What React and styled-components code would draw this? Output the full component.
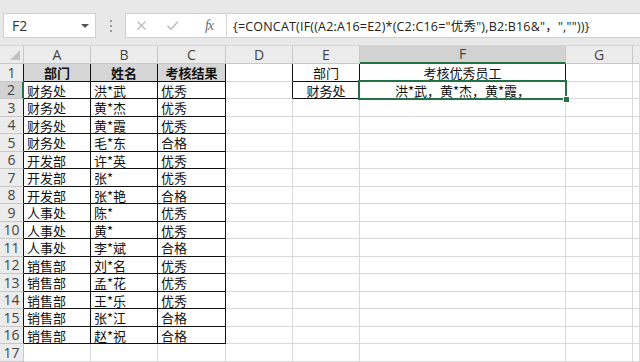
import React from "react";
import styled, { createGlobalStyle, css } from "styled-components";

const Global = createGlobalStyle`
  html, body { margin: 0; padding: 0; background: #ffffff; }
  body { width: 640px; height: 362px; overflow: hidden; }
`;

const CJK = `"Noto Sans CJK SC", "Microsoft YaHei", sans-serif`;

const Page = styled.div`
  width: 640px;
  height: 362px;
  overflow: hidden;
  display: flex;
  flex-direction: column;
  background: #ffffff;
`;

const Toolbar = styled.div`
  height: 46px;
  flex: none;
  box-sizing: border-box;
  background: #e8e8e8;
  display: flex;
  align-items: flex-start;
  padding: 13px 0 0 3px;
  border-bottom: 1px solid #d6d6d6;
`;

const NameBox = styled.div`
  width: 93px;
  height: 25px;
  box-sizing: border-box;
  background: #fff;
  border: 1px solid #cfcfcf;
  display: flex;
  align-items: center;
  justify-content: space-between;
  padding: 0 6px 0 8px;
  font: 14px "Open Sans", "Liberation Sans", sans-serif;
  color: #333;
`;

const Caret = styled.span`
  width: 0;
  height: 0;
  border-left: 4px solid transparent;
  border-right: 4px solid transparent;
  border-top: 4px solid #555;
`;

const Grip = styled.div`
  width: 29px;
  height: 25px;
  display: flex;
  flex-direction: column;
  align-items: center;
  justify-content: center;
  gap: 3px;
`;

const Dot = styled.span`
  width: 2px;
  height: 2px;
  background: #9a9a9a;
`;

const FormulaBox = styled.div`
  flex: 1;
  height: 25px;
  box-sizing: border-box;
  background: #fff;
  border: 1px solid #cfcfcf;
  border-right: none;
  display: flex;
  align-items: center;
`;

const ToolBtn = styled.span`
  width: 31px;
  display: flex;
  justify-content: center;
  align-items: center;
  color: ${(p) => p.$color || "#bdbdbd"};
`;

const Fx = styled.span`
  width: 42px;
  text-align: center;
  font: italic 14px "Liberation Serif", serif;
  color: #6a6a6a;
  letter-spacing: -1px;
`;

const Divider = styled.span`
  width: 1px;
  height: 25px;
  background: #d6d6d6;
  margin-left: -4px;
`;

const FormulaText = styled.span`
  padding-left: 6px;
  font: 12.5px "Open Sans", ${CJK};
  color: #222;
  white-space: nowrap;
  letter-spacing: 0.2px;
`;

const Sheet = styled.div`
  flex: 1;
  display: grid;
  grid-template-columns: 24px 67px 67px 68px 67px 67px 206px 67px 1fr;
  grid-template-rows: ${(p) => p.$rows};
`;

const Head = styled.div`
  box-sizing: border-box;
  background: ${(p) => (p.$sel ? "#d2d2d2" : "#ececec")};
  border-right: 1px solid ${(p) => p.$right || "#c8c8c8"};
  border-bottom: 1px solid ${(p) => p.$bottom || "#c8c8c8"};
  display: flex;
  align-items: center;
  justify-content: center;
  font: 14px "Open Sans", "Liberation Sans", sans-serif;
  line-height: 1;
  color: #444;
  position: relative;
  white-space: nowrap;
  ${(p) =>
    p.$selCol &&
    css`
      border-bottom: 2px solid #217346;
    `}
  ${(p) =>
    p.$selRow &&
    css`
      border-right: 2px solid #217346;
    `}
`;

const CornerTri = styled.span`
  position: absolute;
  right: 3px;
  bottom: 3px;
  width: 0;
  height: 0;
  border-left: 10px solid transparent;
  border-bottom: 10px solid #c2c2c2;
`;

const Cell = styled.div`
  box-sizing: border-box;
  position: relative;
  background: ${(p) => (p.$fill ? "#d6d6d6" : "#fff")};
  border-right: 1px solid ${(p) => (p.$right ? "#111" : "#d9d9d9")};
  border-bottom: 1px solid ${(p) => (p.$bottom ? "#111" : "#d9d9d9")};
  display: flex;
  align-items: center;
  justify-content: ${(p) => (p.$center ? "center" : "flex-start")};
  padding-left: ${(p) => (p.$center ? "0" : "3px")};
  font: ${(p) => (p.$bold ? "bold" : "normal")} 13px ${CJK};
  line-height: 1;
  color: #111;
  white-space: nowrap;
  z-index: ${(p) => (p.$active ? 2 : "auto")};
`;

const Selection = styled.div`
  position: absolute;
  left: -2px;
  top: -2px;
  right: -2px;
  bottom: -2px;
  border: 2px solid #217346;
  pointer-events: none;
`;

const Handle = styled.span`
  position: absolute;
  right: -5px;
  bottom: -5px;
  width: 5px;
  height: 5px;
  background: #217346;
  border: 1px solid #fff;
`;

const data = [
  ["部门", "姓名", "考核结果"],
  ["财务处", "洪*武", "优秀"],
  ["财务处", "黄*杰", "优秀"],
  ["财务处", "黄*霞", "优秀"],
  ["财务处", "毛*东", "合格"],
  ["开发部", "许*英", "优秀"],
  ["开发部", "张*", "优秀"],
  ["开发部", "张*艳", "合格"],
  ["人事处", "陈*", "优秀"],
  ["人事处", "黄*", "优秀"],
  ["人事处", "李*斌", "合格"],
  ["销售部", "刘*名", "优秀"],
  ["销售部", "孟*花", "优秀"],
  ["销售部", "王*乐", "优秀"],
  ["销售部", "张*江", "合格"],
  ["销售部", "赵*祝", "合格"],
];

const side = {
  1: { 5: "部门", 6: "考核优秀员工" },
  2: { 5: "财务处", 6: "洪*武，黄*杰，黄*霞，" },
};

const colLetters = ["A", "B", "C", "D", "E", "F", "G", ""];
const ROWS = 17;

const inTable = (r, c) =>
  (r >= 1 && r <= 16 && c >= 1 && c <= 3) ||
  (r >= 1 && r <= 2 && (c === 5 || c === 6));

const getText = (r, c) => {
  if (c >= 1 && c <= 3 && r <= 16) return data[r - 1][c - 1];
  if (side[r] && side[r][c]) return side[r][c];
  return "";
};

const XIcon = () => (
  <svg width="11" height="11" viewBox="0 0 11 11">
    <path d="M1.5 1.5 L9.5 9.5 M9.5 1.5 L1.5 9.5" stroke="currentColor" strokeWidth="1.4" fill="none" />
  </svg>
);

const CheckIcon = () => (
  <svg width="13" height="11" viewBox="0 0 13 11">
    <path d="M1.5 6 L5 9.2 L11.8 1.8" stroke="currentColor" strokeWidth="1.6" fill="none" />
  </svg>
);

export default function App() {
  const heights = ["18px"];
  for (let r = 1; r <= ROWS; r++) heights.push(r % 2 === 1 ? "18px" : "17px");

  const cells = [];
  cells.push(
    <Head key="corner">
      <CornerTri />
    </Head>
  );
  for (let c = 1; c <= 8; c++) {
    cells.push(
      <Head
        key={`h${c}`}
        $sel={c === 6}
        $selCol={c === 6}
        $right={c === 8 ? "transparent" : undefined}
      >
        {colLetters[c - 1]}
      </Head>
    );
  }
  for (let r = 1; r <= ROWS; r++) {
    cells.push(
      <Head
        key={`r${r}`}
        $sel={r === 2}
        $selRow={r === 2}
        $right={inTable(r, 1) ? "#111" : undefined}
      >
        {r}
      </Head>
    );
    for (let c = 1; c <= 8; c++) {
      const isSel = r === 2 && c === 6;
      cells.push(
        <Cell
          key={`c${r}-${c}`}
          $active={isSel}
          $right={inTable(r, c) || inTable(r, c + 1)}
          $bottom={inTable(r, c) || inTable(r + 1, c)}
          $fill={r === 1 && c <= 3}
          $bold={r === 1 && c <= 3}
          $center={(r === 1 && c <= 3) || c === 5 || c === 6}
        >
          {getText(r, c)}
          {isSel && (
            <Selection>
              <Handle />
            </Selection>
          )}
        </Cell>
      );
    }
  }

  return (
    <Page>
      <Global />
      <Toolbar>
        <NameBox>
          F2
          <Caret />
        </NameBox>
        <Grip>
          <Dot />
          <Dot />
          <Dot />
        </Grip>
        <FormulaBox>
          <ToolBtn>
            <XIcon />
          </ToolBtn>
          <ToolBtn>
            <CheckIcon />
          </ToolBtn>
          <Fx>fx</Fx>
          <Divider />
          <FormulaText>
            {'{=CONCAT(IF((A2:A16=E2)*(C2:C16="优秀"),B2:B16&"，",""))}'}
          </FormulaText>
        </FormulaBox>
      </Toolbar>
      <Sheet $rows={heights.join(" ")}>{cells}</Sheet>
    </Page>
  );
}
